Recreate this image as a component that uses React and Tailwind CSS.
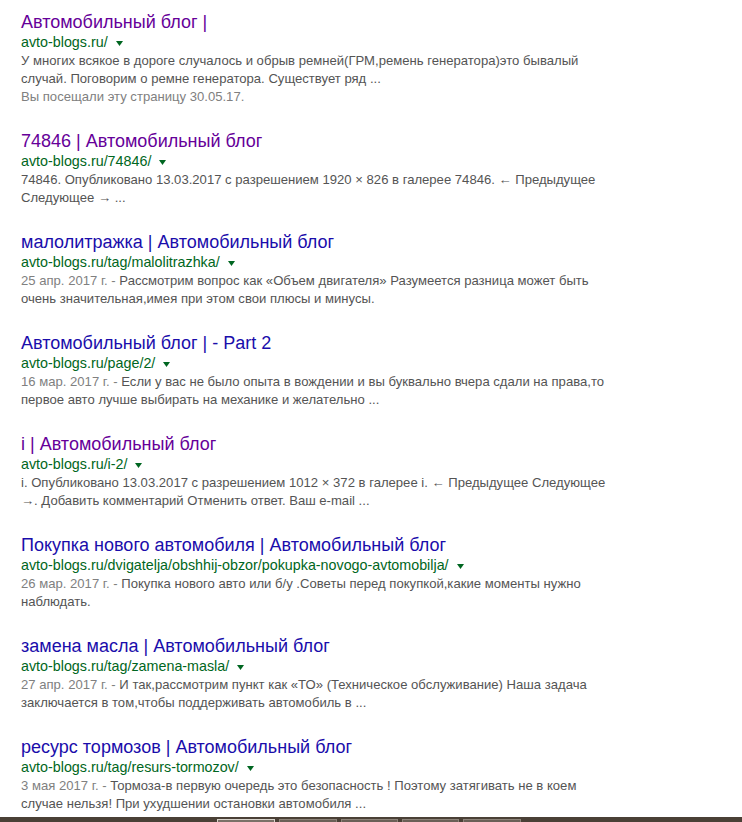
import React from "react";

const results = [
  {
    title: "Автомобильный блог |",
    visited: true,
    url: "avto-blogs.ru/",
    lines: [
      "У многих всякое в дороге случалось и обрыв ремней(ГРМ,ремень генератора)это бывалый",
      "случай. Поговорим о ремне генератора. Существует ряд ...",
    ],
    seen: "Вы посещали эту страницу 30.05.17.",
  },
  {
    title: "74846 | Автомобильный блог",
    visited: true,
    url: "avto-blogs.ru/74846/",
    lines: [
      "74846. Опубликовано 13.03.2017 с разрешением 1920 × 826 в галерее 74846. ← Предыдущее",
      "Следующее → ...",
    ],
  },
  {
    title: "малолитражка | Автомобильный блог",
    visited: false,
    url: "avto-blogs.ru/tag/malolitrazhka/",
    date: "25 апр. 2017 г. - ",
    lines: [
      "Рассмотрим вопрос как «Объем двигателя» Разумеется разница может быть",
      "очень значительная,имея при этом свои плюсы и минусы.",
    ],
  },
  {
    title: "Автомобильный блог | - Part 2",
    visited: false,
    url: "avto-blogs.ru/page/2/",
    date: "16 мар. 2017 г. - ",
    lines: [
      "Если у вас не было опыта в вождении и вы буквально вчера сдали на права,то",
      "первое авто лучше выбирать на механике и желательно ...",
    ],
  },
  {
    title: "i | Автомобильный блог",
    visited: true,
    url: "avto-blogs.ru/i-2/",
    lines: [
      "i. Опубликовано 13.03.2017 с разрешением 1012 × 372 в галерее i. ← Предыдущее Следующее",
      "→. Добавить комментарий Отменить ответ. Ваш e-mail ...",
    ],
  },
  {
    title: "Покупка нового автомобиля | Автомобильный блог",
    visited: false,
    url: "avto-blogs.ru/dvigatelja/obshhij-obzor/pokupka-novogo-avtomobilja/",
    date: "26 мар. 2017 г. - ",
    lines: [
      "Покупка нового авто или б/у .Советы перед покупкой,какие моменты нужно",
      "наблюдать.",
    ],
  },
  {
    title: "замена масла | Автомобильный блог",
    visited: false,
    url: "avto-blogs.ru/tag/zamena-masla/",
    date: "27 апр. 2017 г. - ",
    lines: [
      "И так,рассмотрим пункт как «ТО» (Техническое обслуживание) Наша задача",
      "заключается в том,чтобы поддерживать автомобиль в ...",
    ],
  },
  {
    title: "ресурс тормозов | Автомобильный блог",
    visited: false,
    url: "avto-blogs.ru/tag/resurs-tormozov/",
    date: "3 мая 2017 г. - ",
    lines: [
      "Тормоза-в первую очередь это безопасность ! Поэтому затягивать не в коем",
      "случае нельзя! При ухудшении остановки автомобиля ...",
    ],
  },
];

function Arrow() {
  return (
    <svg width="7" height="5" viewBox="0 0 7 5" className="ml-[8px] mt-[2px]">
      <polygon points="0,0 7,0 3.5,5" fill="#006621" />
    </svg>
  );
}

function Result({ r }) {
  return (
    <div className="mb-[24px]">
      <div
        className={
          "text-[18px] leading-[22px] whitespace-nowrap " +
          (r.visited ? "text-[#660099]" : "text-[#1a0dab]")
        }
      >
        {r.title}
      </div>
      <div className="flex items-center h-[19px] text-[14.3px] leading-[19px] text-[#006621] whitespace-nowrap">
        <span>{r.url}</span>
        <Arrow />
      </div>
      <div className="text-[13.1px] leading-[18px] text-[#545454] whitespace-nowrap">
        {r.lines.map((l, i) => (
          <div key={i}>
            {i === 0 && r.date ? <span className="text-[#808080]">{r.date}</span> : null}
            {l}
          </div>
        ))}
        {r.seen ? <div className="text-[#808080]">{r.seen}</div> : null}
      </div>
    </div>
  );
}

export default function App() {
  return (
    <div
      className="w-[742px] h-[822px] overflow-hidden bg-white flex flex-col"
      style={{ fontFamily: '"Liberation Sans", Arial, sans-serif' }}
    >
      <div className="pl-[21px] pt-[11px] flex-1 min-h-0 overflow-hidden">
        {results.map((r, i) => (
          <Result key={i} r={r} />
        ))}
      </div>
      <div className="h-[5px] bg-[#4a4036] flex items-end pl-[217px] gap-[4px] shrink-0">
        <div className="w-[58px] h-[3px] bg-[#7b7168] border-t border-x border-[#d9d4cc]" />
        <div className="w-[58px] h-[3px] bg-[#6a6057] border-t border-x border-[#8d8379]" />
        <div className="w-[57px] h-[3px] bg-[#6a6057] border-t border-x border-[#8d8379]" />
        <div className="w-[57px] h-[3px] bg-[#6a6057] border-t border-x border-[#8d8379]" />
        <div className="w-[58px] h-[3px] bg-[#6a6057] border-t border-x border-[#8d8379]" />
      </div>
    </div>
  );
}
